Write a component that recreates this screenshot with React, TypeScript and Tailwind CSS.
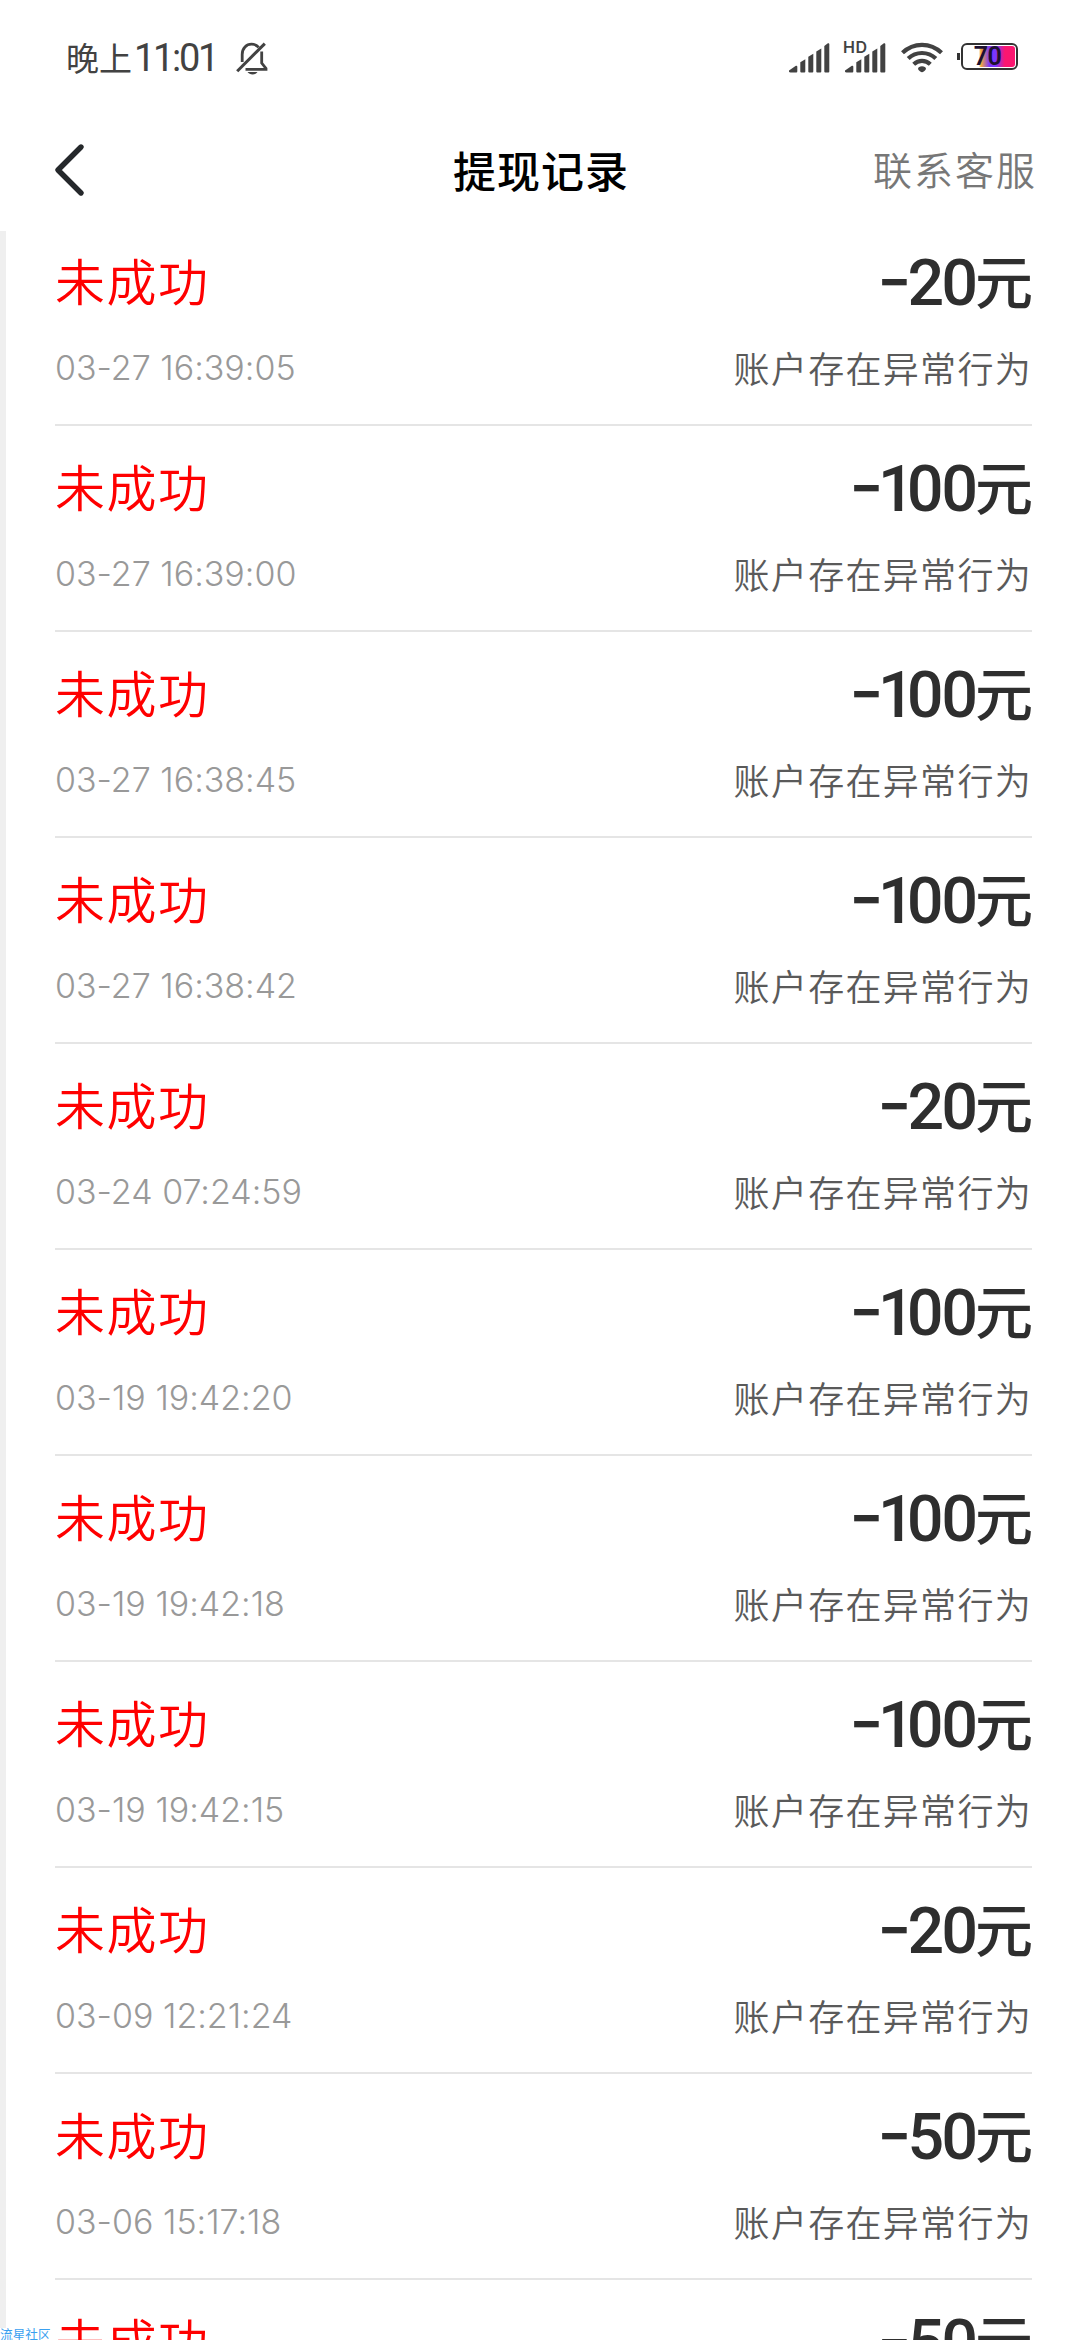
import clsx from 'clsx'

interface WithdrawRecord {
  time: string
  amount: number
}

const records: WithdrawRecord[] = [
  { time: '03-27 16:39:05', amount: 20 },
  { time: '03-27 16:39:00', amount: 100 },
  { time: '03-27 16:38:45', amount: 100 },
  { time: '03-27 16:38:42', amount: 100 },
  { time: '03-24 07:24:59', amount: 20 },
  { time: '03-19 19:42:20', amount: 100 },
  { time: '03-19 19:42:18', amount: 100 },
  { time: '03-19 19:42:15', amount: 100 },
  { time: '03-09 12:21:24', amount: 20 },
  { time: '03-06 15:17:18', amount: 50 },
  { time: '', amount: 50 },
]

const BellOffIcon = () => (
  <svg width="34" height="34" viewBox="0 0 34 34" fill="none" stroke="#424242" strokeWidth="2.8">
    <path d="M7.2 21V13.5C7.2 7 11.5 3.2 16.5 3.2c3 0 5.500 1.2 7.2 3.2" />
    <path d="M26.7 10.5V22l4.3 5.5v.9H10.5" />
    <path d="M29.8 2.6 2.2 30.2" strokeWidth="3" />
    <path d="M12.5 31h10c-1 1.6-3 2.500-5 2.500s-4-.9-5-2.500Z" fill="#424242" stroke="none" />
  </svg>
)

const SignalIcon = () => (
  <svg width="41" height="30" viewBox="0 0 41 30" fill="#424242">
    <path d="M0 27.5 6.5 23c1-.6 1.8-.3 1.8.8V28.4a1 1 0 0 1-1 1H1.5C0 29.4-.4 28.2 0 27.5Z" />
    <path d="M11.3 19.3 16.3 16.2V28.4a1 1 0 0 1-1 1h-3a1 1 0 0 1-1-1Z" />
    <path d="M19.3 13.8 24.3 10.8V28.4a1 1 0 0 1-1 1h-3a1 1 0 0 1-1-1Z" />
    <path d="M27.3 8.4 32.3 5.4V28.4a1 1 0 0 1-1 1h-3a1 1 0 0 1-1-1Z" />
    <path d="M35.3 3 38.5.6c1-.7 1.8-.3 1.8.8v27a1 1 0 0 1-1 1h-3a1 1 0 0 1-1-1Z" />
  </svg>
)

const WifiIcon = () => (
  <svg width="42" height="32" viewBox="0 0 42 32" fill="none" stroke="#424242" strokeWidth="4.2">
    <path d="M1.5 10.8C12.5.1 29.5.1 40.5 10.8" />
    <path d="M7.2 16.6c7.8-7.5 19.8-7.5 27.6 0" />
    <path d="M12.7 22.2c4.8-4.5 11.8-4.5 16.6 0" />
    <path d="M17 27c0-1.8 1.8-2.8 4-2.8s4 1 4 2.8c-.8 1.7-3 3.2-4 3.2S17.8 28.7 17 27Z" fill="#424242" stroke="none" />
  </svg>
)

const StatusBar = () => (
  <div className="flex h-[115px] items-center justify-between pl-[66px] pr-[62px] text-[#424242]">
    <div className="flex items-center">
      <span className="text-[33px] font-normal leading-none">晚上</span>
      <span className="ml-[2px] font-[Roboto] text-[38px] leading-none tracking-[-2.3px]">11:01</span>
      <div className="ml-[18px]">
        <BellOffIcon />
      </div>
    </div>

    <div className="flex items-center">
      <SignalIcon />
      <div className="relative ml-[15px]">
        <SignalIcon />
        <span className="absolute -left-[2px] -top-[3px] bg-white pr-0.5 font-[Inter] text-[16px] font-semibold leading-[14px] tracking-[0.5px]">
          HD
        </span>
      </div>
      <div className="ml-[15px]">
        <WifiIcon />
      </div>
      <div className="-mt-[2px] ml-[14px] flex items-center gap-px">
        <div className="h-[7px] w-[3px] bg-[#333]" />
        <div className="flex h-[27px] w-[57px] rounded-[6px] border-2 border-[#333] bg-white p-px">
          <div className="flex flex-1 items-center justify-center rounded-[3px] bg-[linear-gradient(90deg,#fff_0%,#fff_29%,#f6ad37_33%,#7a36ff_50%,#7a36ff_62%,#fb1670_80%)] pr-[4px] font-[Roboto] text-[25px] font-semibold leading-none tracking-[-0.5px] text-[#1d1030]">
            70
          </div>
        </div>
      </div>
    </div>
  </div>
)

const Header = () => (
  <header className="grid h-[116px] grid-cols-3 items-center pb-[4px] pl-[54px] pr-[46px]">
    <svg className="-mt-[2px]" width="32" height="54" viewBox="0 0 32 54" fill="none" stroke="#25282b" strokeWidth="5.4" strokeLinecap="round" strokeLinejoin="round">
      <path d="M27 4 4 27l23 23" />
    </svg>
    <h1 className="-mt-[4px] pr-[6px] text-center text-[43px] font-medium leading-none tracking-[1px] text-black">
      提现记录
    </h1>
    <span className="-mr-[3px] -mt-[6px] text-right text-[39px] font-[350] leading-none tracking-[2px] text-[#777]">
      联系客服
    </span>
  </header>
)

const RecordRow = ({ record, last }: { record: WithdrawRecord; last: boolean }) => (
  <li
    className={clsx(
      'flex h-[206px] shrink-0 flex-col border-b-2 border-[#e5e5e5] pt-[34px]',
      last && 'border-transparent',
    )}
  >
    <div className="flex h-[58px] items-center justify-between">
      <span className="-mt-[8px] text-[50px] font-[350] leading-none tracking-[1.5px] text-[#f00]">未成功</span>
      <span className="flex items-center font-medium leading-none text-[#2e2e2e]">
        <span className="-mr-[4px] -mt-[2px] origin-right scale-x-125 font-[Inter] text-[60px] font-semibold [font-feature-settings:'case']">
          -
        </span>
        <span className="font-[Roboto] text-[64.5px] tracking-[-3.6px] [font-feature-settings:'pnum']">
          {record.amount}
        </span>
        <span className="-mr-px -mt-[8px] text-[58px]">元</span>
      </span>
    </div>
    {record.time && (
      <div className="mt-[31px] flex h-[48px] items-center justify-between">
        <span className="pt-px font-[Inter] text-[34px] font-[350] text-[#999] [font-feature-settings:'calt'_0]">
          {record.time}
        </span>
        <span className="text-[36px] font-[350] leading-none tracking-[1.3px] text-[#5a5a5a]">
          账户存在异常行为
        </span>
      </div>
    )}
  </li>
)

export default function App() {
  return (
    <div className="relative flex h-[2340px] w-[1080px] flex-col overflow-hidden bg-white font-['Noto_Sans_CJK_SC',sans-serif]">
      <StatusBar />
      <Header />
      <main className="flex-1 overflow-hidden border-l-[6px] border-[#efefef] pl-[49px] pr-12">
        <ul className="-mt-[11px] flex flex-col">
          {records.map((record, index) => (
            <RecordRow key={index} record={record} last={index === records.length - 1} />
          ))}
        </ul>
      </main>
      <span className="absolute left-0 top-[2328px] bg-white text-[12.7px] leading-[12px] text-[#3aa0f0]">
        流星社区
      </span>
    </div>
  )
}
